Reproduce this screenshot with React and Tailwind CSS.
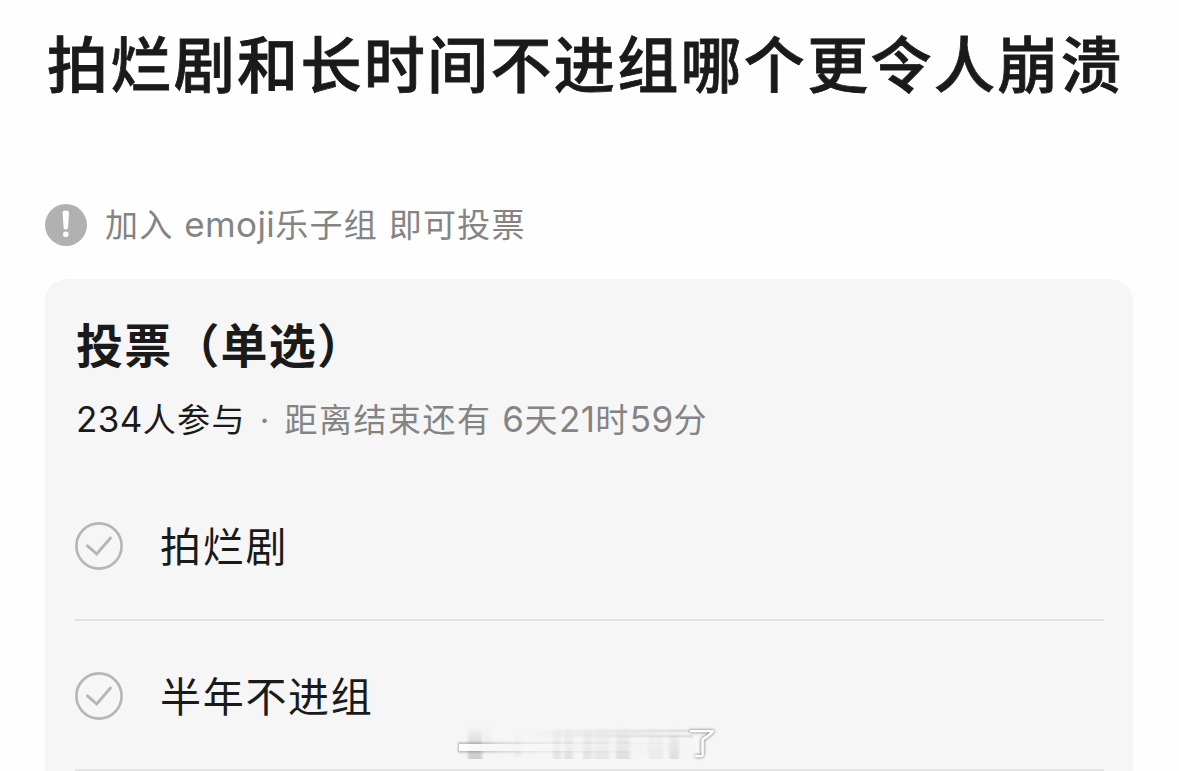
const options = ["拍烂剧", "半年不进组"];

// smeared columns of the watermark: x, y, width, height, opacity
const smears = [
  [10, 9, 14, 33, 0.17],
  [26, 4, 8, 26, 0.03],
  [56, 9, 8, 31, 0.03],
  [95, 9, 8, 33, 0.07],
  [106, 9, 9, 33, 0.08],
  [125, 9, 9, 33, 0.08],
  [136, 9, 15, 33, 0.06],
  [158, 9, 14, 33, 0.09],
  [190, 9, 15, 33, 0.04],
  [211, 9, 10, 33, 0.09],
];

function AlertIcon() {
  return (
    <svg viewBox="0 0 42 42" className="size-[42px] shrink-0">
      <circle cx="21" cy="21" r="21" fill="#b1b1b1" />
      <path d="M17.6 9a3.2 2.4 0 0 1 6.4 0l-1 14.4a2.2 2 0 0 1-4.4 0z" fill="#fff" />
      <circle cx="20.8" cy="30.2" r="2.8" fill="#fff" />
    </svg>
  );
}

function CheckIcon() {
  return (
    <svg viewBox="0 0 48 48" fill="none" stroke="#b6b6b6" className="size-12 shrink-0">
      <circle cx="24" cy="24" r="22.6" strokeWidth="2.6" />
      <path d="M12.5 23.8l9.2 8.2 13.8-16" strokeWidth="2.9" strokeLinecap="round" />
    </svg>
  );
}

function Latin({ children }) {
  return <span className="text-[35px] leading-none tracking-[0.4px]">{children}</span>;
}

function Watermark() {
  return (
    <div className="absolute bottom-0 left-[457px] flex h-[54px] items-start">
      <svg viewBox="-1 0 236 54" className="h-[54px] w-[236px]">
        <defs>
          <linearGradient id="column" x1="0" y1="0" x2="0" y2="1">
            <stop offset="0" stopColor="#000" stopOpacity="0" />
            <stop offset="0.5" stopColor="#000" stopOpacity="0.6" />
            <stop offset="1" stopColor="#000" />
          </linearGradient>
          <linearGradient id="upper">
            <stop offset="0.3" stopColor="#fff" stopOpacity="0" />
            <stop offset="1" stopColor="#fff" stopOpacity="0.8" />
          </linearGradient>
          <linearGradient id="lower">
            <stop offset="0" stopColor="#fff" />
            <stop offset="0.4" stopColor="#fff" stopOpacity="0.6" />
            <stop offset="1" stopColor="#fff" stopOpacity="0" />
          </linearGradient>
          <linearGradient id="upperEdge">
            <stop offset="0.3" stopColor="#000" stopOpacity="0" />
            <stop offset="1" stopColor="#000" stopOpacity="0.2" />
          </linearGradient>
          <linearGradient id="lowerEdge">
            <stop offset="0" stopColor="#000" stopOpacity="0.28" />
            <stop offset="0.3" stopColor="#000" stopOpacity="0.07" />
            <stop offset="1" stopColor="#000" stopOpacity="0" />
          </linearGradient>
          <filter id="soft" x="-50%" y="-20%" width="200%" height="140%">
            <feGaussianBlur stdDeviation="1.8 0.7" />
          </filter>
          <filter id="edge" x="-2%" y="-60%" width="104%" height="220%">
            <feGaussianBlur stdDeviation="0.9" />
          </filter>
        </defs>
        {smears.map(([x, y, width, height, opacity]) => (
          <rect key={x} x={x} y={y} width={width} height={height} opacity={opacity} fill="url(#column)" filter="url(#soft)" />
        ))}
        <rect x="0" y="13.5" width="236" height="6" fill="url(#upperEdge)" filter="url(#edge)" />
        <rect x="0" y="14.5" width="236" height="4" fill="url(#upper)" />
        <rect x="0" y="25.5" width="236" height="10" fill="url(#lowerEdge)" filter="url(#edge)" />
        <rect x="1" y="27" width="236" height="7" fill="url(#lower)" />
      </svg>
      <span className="-ml-1.5 pt-2 text-[31px] leading-9 text-white drop-shadow-[0_0_1.5px_#000000a0]">了</span>
    </div>
  );
}

export default function App() {
  return (
    <main className="relative flex h-[771px] w-[1179px] flex-col overflow-hidden bg-[#fefefe] px-[45px] pt-[30px] font-['Inter','Noto_Sans_CJK_SC',sans-serif] text-[#1a1a1a]">
      <h1 className="whitespace-nowrap pb-[102px] pl-0.5 text-[61px] font-medium leading-[72px] tracking-[2.35px] [-webkit-text-stroke:0.8px_#1a1a1a]">
        拍烂剧和长时间不进组哪个更令人崩溃
      </h1>

      <div className="flex flex-col gap-[33px]">
        <div className="flex h-[42px] items-center gap-[18px] whitespace-nowrap text-[33px] leading-[42px] tracking-[1.3px] text-[#848484]">
          <AlertIcon />
          <p>
            加入 <Latin>emoji</Latin>乐子组 即可投票
          </p>
        </div>

        <section className="flex h-[520px] w-[1088px] flex-col gap-[29px] rounded-t-[22px] bg-[#f6f6f6] pl-[30px] pr-[29px] pt-[37px]">
          <header className="flex flex-col gap-[23px] whitespace-nowrap pl-px">
            <h2 className="text-[47px] font-bold leading-[60px] tracking-[1.2px]">投票（单选）</h2>
            <div className="flex h-[43px] gap-3.5 text-[33px] leading-[43px] tracking-[1.3px]">
              <span>
                <Latin>234</Latin>人参与
              </span>
              <span className="text-[#848484]">·</span>
              <span className="tracking-[1.5px] text-[#848484]">
                距离结束还有 <Latin>6</Latin>天<Latin>21</Latin>时<Latin>59</Latin>分
              </span>
            </div>
          </header>

          <ul className="flex flex-col">
            {options.map((option) => (
              <li key={option} className="flex h-[150px] items-center gap-[37px] border-b-2 border-[#e3e3e3] pt-0.5 text-[41px] tracking-[1.7px]">
                <CheckIcon />
                <span className="pt-px leading-[50px]">{option}</span>
              </li>
            ))}
          </ul>
        </section>
      </div>

      <Watermark />
    </main>
  );
}
